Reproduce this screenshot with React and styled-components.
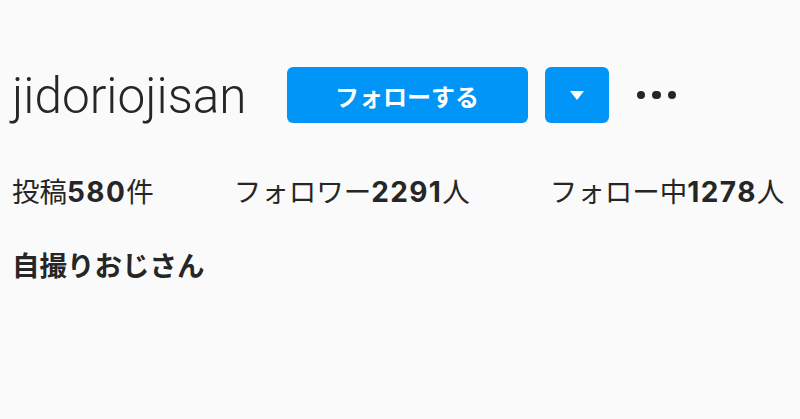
import styled, { createGlobalStyle } from "styled-components";

const GlobalStyle = createGlobalStyle`
  html, body {
    margin: 0;
    background: #fafafa;
  }
  body {
    color: #262626;
    font-family: "Noto Sans CJK JP", "Liberation Sans", sans-serif;
  }
`;

const profile = {
  username: "jidoriojisan",
  name: "自撮りおじさん",
  stats: [
    { label: "投稿", value: "580", unit: "件" },
    { label: "フォロワー", value: "2291", unit: "人" },
    { label: "フォロー中", value: "1278", unit: "人" },
  ],
};

export default function App() {
  return (
    <>
      <GlobalStyle />
      <Header>
        <TitleRow>
          <Username>{profile.username}</Username>
          <FollowButton>フォローする</FollowButton>
          <DropdownButton aria-label="おすすめ">
            <Caret />
          </DropdownButton>
          <MoreButton aria-label="オプション">
            <Dot />
            <Dot />
            <Dot />
          </MoreButton>
        </TitleRow>
        <Stats>
          {profile.stats.map((s) => (
            <Stat key={s.label}>
              {s.label}
              <Count>{s.value}</Count>
              {s.unit}
            </Stat>
          ))}
        </Stats>
        <FullName>{profile.name}</FullName>
      </Header>
    </>
  );
}

const Header = styled.section`
  padding: 67px 0 0 12px;
`;

const TitleRow = styled.div`
  display: flex;
  align-items: center;
  height: 56px;
`;

const Username = styled.h2`
  margin: 0 40px 0 0;
  font-family: Roboto, "Liberation Sans", sans-serif;
  font-weight: 300;
  font-size: 49.5px;
  line-height: 56px;
  color: #262626;
  position: relative;
  top: 1px;
`;

const FollowButton = styled.button`
  width: 241px;
  height: 56px;
  border: 0;
  border-radius: 6px;
  background: #0095f6;
  color: #fff;
  font-family: "Noto Sans CJK JP", sans-serif;
  font-weight: 700;
  font-size: 24px;
  padding: 0;
  margin-right: 17px;
`;

const DropdownButton = styled.button`
  width: 64px;
  height: 56px;
  border: 0;
  border-radius: 6px;
  background: #0095f6;
  display: flex;
  align-items: center;
  justify-content: center;
  padding: 0;
  margin-right: 28px;
`;

const Caret = styled.span`
  width: 0;
  height: 0;
  border-left: 7px solid transparent;
  border-right: 7px solid transparent;
  border-top: 9px solid #fff;
`;

const MoreButton = styled.button`
  display: flex;
  gap: 7px;
  background: none;
  border: 0;
  padding: 0;
`;

const Dot = styled.span`
  width: 8.5px;
  height: 8.5px;
  border-radius: 50%;
  background: #262626;
`;

const Stats = styled.ul`
  display: flex;
  gap: 80px;
  list-style: none;
  margin: 47px 0 0;
  padding: 0;
`;

const Stat = styled.li`
  font-size: 27.5px;
  line-height: 40px;
  white-space: nowrap;
`;

const Count = styled.span`
  font-family: Inter, "Liberation Sans", sans-serif;
  font-weight: 700;
  font-size: 28px;
  letter-spacing: 1.4px;
`;

const FullName = styled.h1`
  margin: 32px 0 0;
  font-size: 27.5px;
  line-height: 40px;
  font-weight: 700;
`;
